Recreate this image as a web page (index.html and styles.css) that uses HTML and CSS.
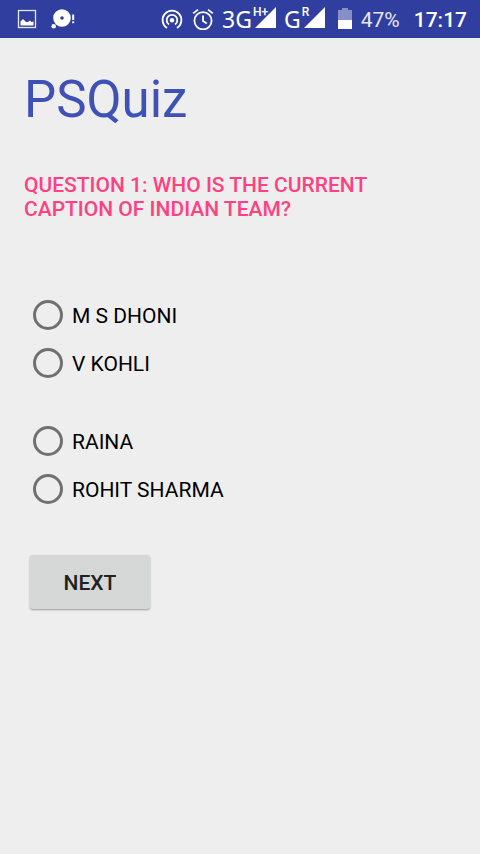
FILE: index.html
```html
<!DOCTYPE html>
<html lang="en">
<head>
<meta charset="utf-8">
<meta name="viewport" content="width=device-width, initial-scale=1">
<title>PSQuiz</title>
<link rel="stylesheet" href="styles.css">
</head>
<body>
<header class="status-bar">
  <div class="notifications">
    <svg width="20" height="20" viewBox="0 0 20 20" aria-hidden="true">
      <rect x="1.5" y="1.5" width="17" height="17" fill="none" stroke="#e6e8f5" stroke-width="1.3"/>
      <path d="M3.5 16.5V12.5L6 10L9 13H11L13 11.5L14.5 13L16.5 12.5V16.5Z" fill="#fff"/>
    </svg>
    <svg width="24" height="20" viewBox="0 0 24 20" aria-hidden="true">
      <path fill="#fff" fill-rule="evenodd" d="M11 0.2a8.8 8.8 0 1 0 0 17.6a8.8 8.8 0 1 0 0-17.6ZM11 7.2a1.8 1.8 0 1 1 0 3.6a1.8 1.8 0 1 1 0-3.6Z"/>
      <circle cx="2.7" cy="17.3" r="2.3" fill="#fff"/>
      <path d="M22.2 5.5V11M22.2 12.3V14.2" stroke="#fff" stroke-width="2"/>
    </svg>
  </div>
  <div class="indicators">
    <svg width="22" height="22" viewBox="0 0 22 22" fill="none" stroke="#fff" stroke-width="1.8" aria-hidden="true">
      <path d="M6 20A9.4 9.4 0 1 1 16 20"/>
      <path d="M8 16.6A5.3 5.3 0 1 1 14 16.6"/>
      <circle cx="11" cy="12.3" r="2.2" fill="#fff" stroke="none"/>
    </svg>
    <svg class="alarm" width="22" height="22" viewBox="0 0 22 22" fill="none" stroke="#fff" stroke-width="1.8" aria-hidden="true">
      <circle cx="11" cy="12.7" r="8.6"/>
      <path d="M11 7.6V13L14.8 15.6M1.2 5.4L6 1.6M16 1.6L20.8 5.4"/>
    </svg>
    <div class="network">
      <span>3G</span>
      <div class="signal">
        <svg width="21" height="21" viewBox="0 0 21 21" aria-hidden="true"><path d="M0 21L21 0V21Z" fill="#fff"/></svg>
        <span class="mode">H+</span>
      </div>
    </div>
    <div class="network roaming">
      <span>G</span>
      <div class="signal">
        <svg width="21" height="21" viewBox="0 0 21 21" aria-hidden="true"><path d="M0 21L21 0V21Z" fill="#fff"/></svg>
        <span class="mode">R</span>
      </div>
    </div>
    <svg class="battery" width="14" height="22" viewBox="0 0 14 22" aria-hidden="true">
      <path d="M0 2H4V0H10V2H14V12H0Z" fill="#868fc7"/>
      <path d="M0 12H14V21H0Z" fill="#fff"/>
    </svg>
    <span class="percent">47%</span>
    <time class="clock">17:17</time>
  </div>
</header>
<main class="quiz">
  <h1>PSQuiz</h1>
  <form>
    <p class="question" id="question">QUESTION 1: WHO IS THE CURRENT CAPTION OF INDIAN TEAM?</p>
    <div class="answers" role="radiogroup" aria-labelledby="question">
      <div class="pair">
        <label><input type="radio" name="answer" value="dhoni"><span>M S DHONI</span></label>
        <label><input type="radio" name="answer" value="kohli"><span>V KOHLI</span></label>
      </div>
      <div class="pair">
        <label><input type="radio" name="answer" value="raina"><span>RAINA</span></label>
        <label><input type="radio" name="answer" value="sharma"><span>ROHIT SHARMA</span></label>
      </div>
    </div>
    <button class="next" type="button">NEXT</button>
  </form>
</main>
</body>
</html>
```
FILE: styles.css
```css
* {
  box-sizing: border-box;
}

body {
  margin: 0;
  background: #eee;
  color: #000;
  font: 400 21px/24px Roboto, sans-serif;
}

.status-bar {
  display: flex;
  justify-content: space-between;
  align-items: center;
  height: 38px;
  padding: 0 13px 0 17px;
  background: #303f9f;
  color: #fff;
}

.status-bar svg {
  display: block;
  flex: none;
}

.notifications,
.indicators {
  display: flex;
  align-items: center;
}

.notifications {
  gap: 14px;
}

.alarm {
  margin-left: 9px;
}

.network {
  display: flex;
  align-items: center;
  gap: 3px;
  margin-left: 8px;
  font: 400 23px/24px "Noto Sans", sans-serif;
}

.signal {
  position: relative;
  padding-bottom: 3px;
}

.mode {
  position: absolute;
  top: -1px;
  left: -2px;
  font: 500 12px/12px Roboto, sans-serif;
}

.battery {
  margin-left: 13px;
}

.percent {
  margin-left: 9px;
  padding-top: 2px;
  color: #e6e8f5;
}

.clock {
  margin-left: 14px;
  padding-top: 2px;
  font-weight: 500;
}

.quiz {
  padding: 32px 24px;
}

h1 {
  margin: 0 0 43px;
  color: #3f51b5;
  font-size: 51px;
  font-weight: 400;
  line-height: 60px;
}

.question {
  margin: 0 0 70px;
  color: #ff4081;
  font-weight: 500;
}

.answers {
  display: grid;
  gap: 30px;
  margin-bottom: 42px;
}

.pair {
  display: grid;
  justify-items: start;
}

label {
  display: flex;
  align-items: center;
  gap: 9px;
  height: 48px;
  padding-left: 9px;
}

label span {
  padding-top: 2px;
}

input {
  appearance: none;
  width: 30px;
  height: 30px;
  margin: 0;
  border: 3px solid #707070;
  border-radius: 50%;
}

input:checked {
  border-color: #ff4081;
  background: radial-gradient(#ff4081 50%, transparent 52%);
}

.next {
  min-width: 120px;
  height: 54px;
  margin: 0 6px;
  padding: 2px 24px 0;
  border: 0;
  border-radius: 3px;
  background: #d6d7d7;
  box-shadow: 0 1px 2px rgba(0, 0, 0, 0.35);
  color: #212121;
  font: inherit;
  font-weight: 500;
}
```
